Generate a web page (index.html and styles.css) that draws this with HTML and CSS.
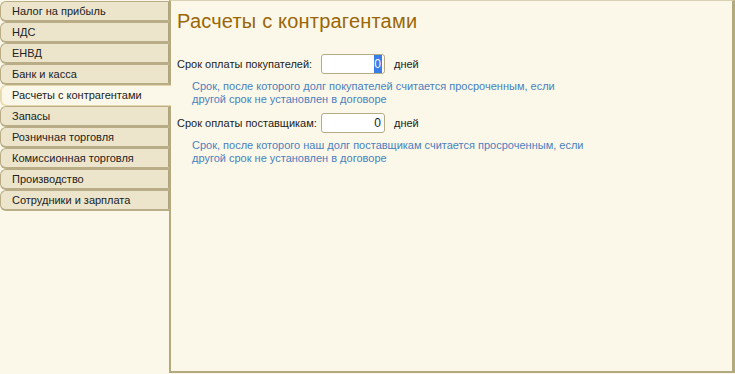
FILE: index.html
```html
<!DOCTYPE html>
<html lang="ru">
<head>
    <meta charset="UTF-8">
    <title>Настройки учета</title>
    <link rel="stylesheet" href="styles.css">
</head>
<body>
    <div class="window">
        <!-- Tabs on the left -->
        <ul class="tabs">
            <li class="tab">Налог на прибыль</li>
            <li class="tab">НДС</li>
            <li class="tab">ЕНВД</li>
            <li class="tab">Банк и касса</li>
            <li class="tab active">Расчеты с контрагентами</li>
            <li class="tab">Запасы</li>
            <li class="tab">Розничная торговля</li>
            <li class="tab">Комиссионная торговля</li>
            <li class="tab">Производство</li>
            <li class="tab">Сотрудники и зарплата</li>
        </ul>

        <div class="panel">
            <h1>Расчеты с контрагентами</h1>

            <div class="field">
                <label for="buyers">Срок оплаты покупателей:</label>
                <input type="text" id="buyers" class="num selected" value="0">
                <span class="unit">дней</span>
            </div>
            <p class="hint">Срок, после которого долг покупателей считается просроченным, если<br>другой срок не установлен в договоре</p>

            <div class="field">
                <label for="suppliers">Срок оплаты поставщикам:</label>
                <input type="text" id="suppliers" class="num" value="0">
                <span class="unit">дней</span>
            </div>
            <p class="hint">Срок, после которого наш долг поставщикам считается просроченным, если<br>другой срок не установлен в договоре</p>
        </div>
    </div>
</body>
</html>
```

FILE: styles.css
```css
* {
    margin: 0;
    padding: 0;
    box-sizing: border-box;
}

body {
    background: #fbf8e9;
    font-family: 'Liberation Sans', Arial, sans-serif;
    font-size: 11px;
    color: #1c1c1c;
}

.window {
    display: flex;
    width: 735px;
    height: 374px;
}

.tabs {
    list-style: none;
    width: 170px;
    padding-top: 1px;
    flex-shrink: 0;
}

.tab {
    height: 21px;
    line-height: 19px;
    padding-left: 11px;
    background: #ece5cc;
    border: 1px solid #b8ad86;
    border-right: 2px solid #b0a67e;
    border-bottom: 2px solid #b8ad86;
    border-radius: 6px 0 0 6px;
    white-space: nowrap;
    color: #222222;
}

.tab.active {
    background: #fbf8e9;
    border: 1px solid #e6d8ae;
    border-right: none;
    box-shadow: inset 1px 0 0 #f3dca4;
    margin-right: -1px;
    position: relative;
}

.panel {
    flex: 1;
    height: 373px;
    margin-left: -1px;
    border: 2px solid #b3a97f;
    border-top: 1px solid #d9d1b2;
    border-right: 3px solid #b3a97f;
    padding: 8px 0 0 6px;
}

h1 {
    font-size: 20px;
    line-height: 24px;
    font-weight: normal;
    color: #9a6608;
    margin-bottom: 21px;
    letter-spacing: 0.2px;
}

.field {
    display: flex;
    align-items: center;
    height: 20px;
    white-space: nowrap;
}

.field label {
    width: 144px;
    flex-shrink: 0;
}

.num {
    width: 64px;
    height: 20px;
    border: 1px solid #b5ab86;
    border-radius: 3px;
    background: #ffffff;
    text-align: right;
    padding-right: 3px;
    font-family: inherit;
    font-size: 12px;
    color: #1c1c1c;
}

.num.selected {
    color: #ffffff;
    background: linear-gradient(to left, #ffffff 0, #ffffff 2px, #3a7de8 2px, #3a7de8 10px, #ffffff 10px);
}

.unit {
    margin-left: 9px;
}

.hint {
    color: #4a7fc0;
    line-height: 13px;
    margin: 6px 0 7px 15px;
}
```
